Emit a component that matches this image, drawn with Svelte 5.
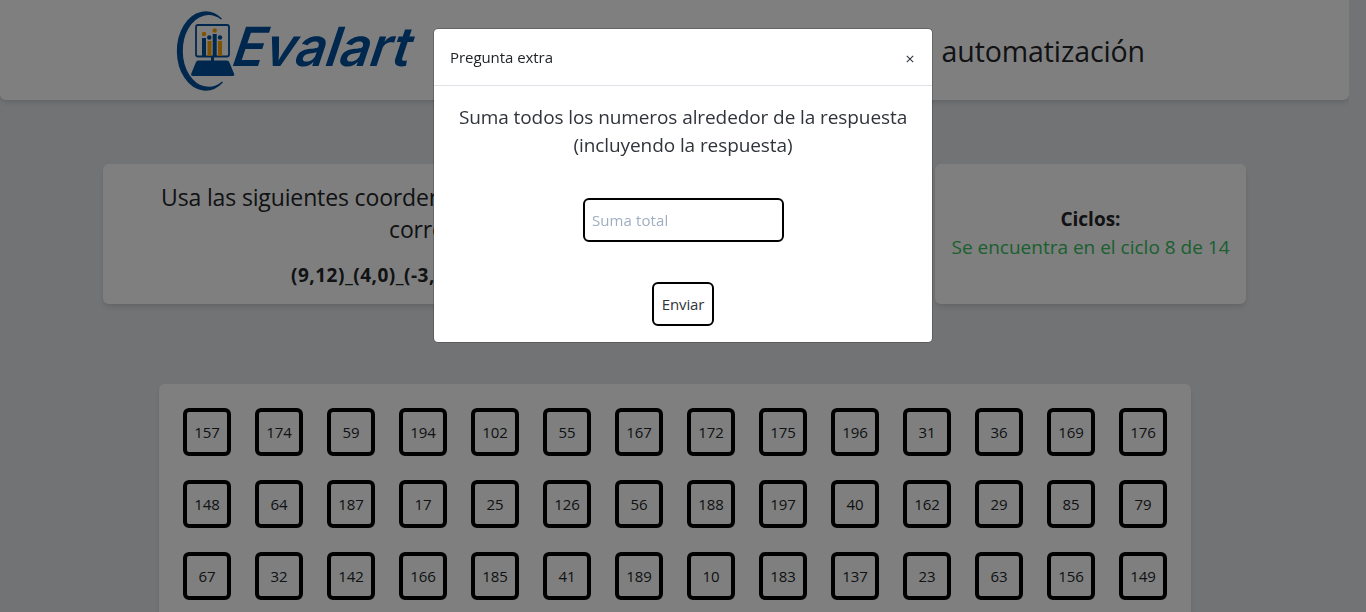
<script>
  const rows = [
    [157, 174, 59, 194, 102, 55, 167, 172, 175, 196, 31, 36, 169, 176],
    [148, 64, 187, 17, 25, 126, 56, 188, 197, 40, 162, 29, 85, 79],
    [67, 32, 142, 166, 185, 41, 189, 10, 183, 137, 23, 63, 156, 149]
  ];
  let total = $state('');
</script>

<div class="page">
  <header>
    <svg class="logo" width="254" height="92" viewBox="175 4 254 92" aria-label="Evalart">
      <path d="M222.500 19A28 39 0 1 0 223.500 82A26.500 36.500 0 1 1 222.500 19Z" fill="#00509c" stroke="#00509c" stroke-width="1.300" transform="translate(-1 0)" />
      <rect x="196" y="25" width="33" height="31.500" rx="2" fill="none" stroke="#00509c" stroke-width="1.800" />
      <g fill="#00509c">
        <rect x="202" y="38" width="4" height="18" /><rect x="212.700" y="34" width="4" height="22" />
        <circle cx="209.300" cy="37.500" r="2.200" /><circle cx="220" cy="37.500" r="2.200" />
        <rect x="211" y="56" width="3" height="5" />
        <path d="M198 60.500H227Q228.500 60.500 229.200 62L234 73.500Q235 76 232.500 76H193Q190.500 76 191.300 73.500L196 62Q196.600 60.500 198 60.500Z" />
      </g>
      <g fill="#ffa500">
        <circle cx="204" cy="34" r="2.200" /><circle cx="214.700" cy="30.500" r="2.200" />
        <rect x="207.500" y="41" width="4" height="15" /><rect x="218" y="41" width="4" height="15" />
      </g>
      <text x="229" y="66" textLength="178" lengthAdjust="spacingAndGlyphs" transform="translate(22.100 0) skewX(-18.500)">Evalart</text>
    </svg>
    <h1>automatización</h1>
  </header>

  <div class="cards">
    <section class="task">
      <p class="l1">Usa las siguientes coordenadas</p>
      <p class="l2">corre</p>
      <p class="coords">(9,12)_(4,0)_(-3,</p>
    </section>
    <section class="cycles">
      <b>Ciclos:</b>
      <span>Se encuentra en el ciclo 8 de 14</span>
    </section>
  </div>

  <div class="board">
    {#each rows as row}
      {#each row as n}
        <div class="cell">{n}</div>
      {/each}
    {/each}
  </div>
</div>

<div class="overlay">
  <div class="modal" role="dialog">
    <div class="head"><span class="title">Pregunta extra</span>
      <button class="close" aria-label="Cerrar"><svg width="8" height="8" viewBox="0 0 8 8"><path d="M.8 .8L7.200 7.200M7.200 .8L.8 7.200" stroke="#33383d" stroke-width="1.100" /></svg></button>
    </div>
    <div class="body">
      <p class="q1">Suma todos los numeros alrededor de la respuesta</p>
      <p class="q2">(incluyendo la respuesta)</p>
      <input placeholder="Suma total" bind:value={total} />
      <button class="send">Enviar</button>
    </div>
  </div>
</div>

<style>
  :global(body) { margin: 0; overflow: hidden; background: #e5e7eb; }
  * { box-sizing: border-box; }
  .page { width: 1349px; height: 612px; overflow: hidden; font-family: "Open Sans", "Noto Sans", sans-serif; color: #212529; }
  p, h1 { margin: 0; font-weight: 400; white-space: nowrap; }
  header, section, .board { background: #fff; box-shadow: 0 4px 6px -1px rgba(0,0,0,.1), 0 2px 4px -1px rgba(0,0,0,.06); }
  header { height: 100px; border-radius: 0 0 6px 6px; display: flex; justify-content: space-between; align-items: center; padding: 0 204px 0 175px; }
  .logo { overflow: visible; }
  .logo text { font: 600 54px Inter, sans-serif; fill: #00509c; }
  h1 { font-size: 28.500px; line-height: 36px; padding-top: 2px; letter-spacing: -.1px; }
  .cards { display: flex; gap: 24px; padding: 64px 103px 0; }
  section { height: 140px; border-radius: 6px; }
  .task { width: 808px; padding-top: 17px; overflow: hidden; font-size: 23px; line-height: 32px; }
  .l1 { padding-left: 58px; letter-spacing: -.14px; }
  .l2 { padding-left: 286px; letter-spacing: -.14px; }
  .task .coords { padding: 16px 0 0 188px; font-size: 19px; line-height: 28px; font-weight: 700; letter-spacing: .5px; }
  .cycles { width: 311px; display: flex; flex-direction: column; align-items: center; justify-content: center; font-size: 19px; line-height: 28px; white-space: nowrap; padding-bottom: 3px; }
  .cycles b { font-weight: 700; }
  .cycles span { color: #34c060; }
  .board { margin: 80px 0 0 159px; width: 1032px; height: 260px; border-radius: 6px; padding: 24px; display: grid; grid-template-columns: repeat(14, 48px); grid-auto-rows: 48px; gap: 24px; }
  .cell { border: 4px solid #000; border-radius: 6px; display: flex; align-items: center; justify-content: center; font-size: 15px; letter-spacing: -.1px; }
  .overlay { position: fixed; inset: 0; background: rgba(0,0,0,.5); font-family: "Open Sans", "Noto Sans", sans-serif; color: #212529; }
  .modal { width: 500px; height: 315px; margin: 28px auto; background: #fff; background-clip: padding-box; border: 1px solid rgba(0,0,0,.2); border-radius: 5px; }
  .head { height: 57px; padding: 0 16px; display: flex; align-items: center; justify-content: space-between; border-bottom: 1px solid #dee2e6; font-size: 15px; letter-spacing: -.06px; }
  .close { border: 0; background: none; padding: 3px 2px 0; display: flex; }
  .body { display: flex; flex-direction: column; align-items: center; padding-top: 17px; font-size: 19px; line-height: 28px; letter-spacing: -.09px; color: #30343a; }
  input { margin-top: 39px; width: 201px; height: 44px; border: 2px solid #000; border-radius: 6px; padding: 0 8px 0 7.500px; font: 15px "Open Sans", sans-serif; letter-spacing: .1px; background: #fff; outline: 0; }
  input::placeholder { color: #a0aec0; opacity: 1; }
  .send { margin-top: 40px; width: 62px; height: 44px; border: 2px solid #000; border-radius: 6px; padding: 0; font: 15px "Open Sans", sans-serif; color: #30343a; background: #fff; letter-spacing: -.1px; }
</style>
